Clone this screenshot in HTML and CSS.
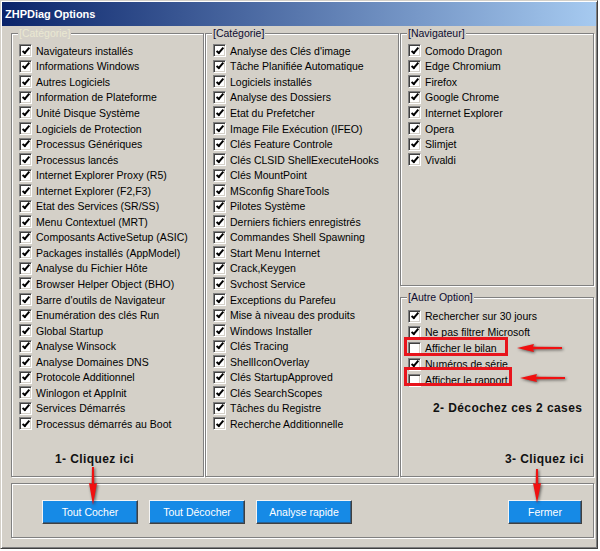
FILE: index.html
```html
<!DOCTYPE html>
<html lang="fr">
<head>
<meta charset="utf-8">
<title>ZHPDiag Options</title>
<link rel="stylesheet" href="styles.css">
</head>
<body>
<div class="window">
  <div class="titlebar"><span class="title">ZHPDiag Options</span></div>
  <div class="content">
    <div class="columns">
      <div class="group">
        <div class="legend disabled">[Catégorie]</div>
        <ul class="list">
          <li class="row"><span class="cb on"></span><span>Navigateurs installés</span></li>
          <li class="row"><span class="cb on"></span><span>Informations Windows</span></li>
          <li class="row"><span class="cb on"></span><span>Autres Logiciels</span></li>
          <li class="row"><span class="cb on"></span><span>Information de Plateforme</span></li>
          <li class="row"><span class="cb on"></span><span>Unité Disque Système</span></li>
          <li class="row"><span class="cb on"></span><span>Logiciels de Protection</span></li>
          <li class="row"><span class="cb on"></span><span>Processus Génériques</span></li>
          <li class="row"><span class="cb on"></span><span>Processus lancés</span></li>
          <li class="row"><span class="cb on"></span><span>Internet Explorer Proxy (R5)</span></li>
          <li class="row"><span class="cb on"></span><span>Internet Explorer (F2,F3)</span></li>
          <li class="row"><span class="cb on"></span><span>Etat des Services (SR/SS)</span></li>
          <li class="row"><span class="cb on"></span><span>Menu Contextuel (MRT)</span></li>
          <li class="row"><span class="cb on"></span><span>Composants ActiveSetup (ASIC)</span></li>
          <li class="row"><span class="cb on"></span><span>Packages installés (AppModel)</span></li>
          <li class="row"><span class="cb on"></span><span>Analyse du Fichier Hôte</span></li>
          <li class="row"><span class="cb on"></span><span>Browser Helper Object (BHO)</span></li>
          <li class="row"><span class="cb on"></span><span>Barre d'outils de Navigateur</span></li>
          <li class="row"><span class="cb on"></span><span>Enumération des clés Run</span></li>
          <li class="row"><span class="cb on"></span><span>Global Startup</span></li>
          <li class="row"><span class="cb on"></span><span>Analyse Winsock</span></li>
          <li class="row"><span class="cb on"></span><span>Analyse Domaines DNS</span></li>
          <li class="row"><span class="cb on"></span><span>Protocole Additionnel</span></li>
          <li class="row"><span class="cb on"></span><span>Winlogon et AppInit</span></li>
          <li class="row"><span class="cb on"></span><span>Services Démarrés</span></li>
          <li class="row"><span class="cb on"></span><span>Processus démarrés au Boot</span></li>
        </ul>
      </div>
      <div class="group">
        <div class="legend">[Catégorie]</div>
        <ul class="list">
          <li class="row"><span class="cb on"></span><span>Analyse des Clés d'image</span></li>
          <li class="row"><span class="cb on"></span><span>Tâche Planifiée Automatique</span></li>
          <li class="row"><span class="cb on"></span><span>Logiciels installés</span></li>
          <li class="row"><span class="cb on"></span><span>Analyse des Dossiers</span></li>
          <li class="row"><span class="cb on"></span><span>Etat du Prefetcher</span></li>
          <li class="row"><span class="cb on"></span><span>Image File Exécution (IFEO)</span></li>
          <li class="row"><span class="cb on"></span><span>Clés Feature Controle</span></li>
          <li class="row"><span class="cb on"></span><span>Clés CLSID ShellExecuteHooks</span></li>
          <li class="row"><span class="cb on"></span><span>Clés MountPoint</span></li>
          <li class="row"><span class="cb on"></span><span>MSconfig ShareTools</span></li>
          <li class="row"><span class="cb on"></span><span>Pilotes Système</span></li>
          <li class="row"><span class="cb on"></span><span>Derniers fichiers enregistrés</span></li>
          <li class="row"><span class="cb on"></span><span>Commandes Shell Spawning</span></li>
          <li class="row"><span class="cb on"></span><span>Start Menu Internet</span></li>
          <li class="row"><span class="cb on"></span><span>Crack,Keygen</span></li>
          <li class="row"><span class="cb on"></span><span>Svchost Service</span></li>
          <li class="row"><span class="cb on"></span><span>Exceptions du Parefeu</span></li>
          <li class="row"><span class="cb on"></span><span>Mise à niveau des produits</span></li>
          <li class="row"><span class="cb on"></span><span>Windows Installer</span></li>
          <li class="row"><span class="cb on"></span><span>Clés Tracing</span></li>
          <li class="row"><span class="cb on"></span><span>ShellIconOverlay</span></li>
          <li class="row"><span class="cb on"></span><span>Clés StartupApproved</span></li>
          <li class="row"><span class="cb on"></span><span>Clés SearchScopes</span></li>
          <li class="row"><span class="cb on"></span><span>Tâches du Registre</span></li>
          <li class="row"><span class="cb on"></span><span>Recherche Additionnelle</span></li>
        </ul>
      </div>
      <div class="col3">
        <div class="group nav">
          <div class="legend">[Navigateur]</div>
          <ul class="list">
            <li class="row"><span class="cb on"></span><span>Comodo Dragon</span></li>
            <li class="row"><span class="cb on"></span><span>Edge Chromium</span></li>
            <li class="row"><span class="cb on"></span><span>Firefox</span></li>
            <li class="row"><span class="cb on"></span><span>Google Chrome</span></li>
            <li class="row"><span class="cb on"></span><span>Internet Explorer</span></li>
            <li class="row"><span class="cb on"></span><span>Opera</span></li>
            <li class="row"><span class="cb on"></span><span>Slimjet</span></li>
            <li class="row"><span class="cb on"></span><span>Vivaldi</span></li>
          </ul>
        </div>
        <div class="group other">
          <div class="legend">[Autre Option]</div>
          <ul class="list tall">
            <li class="row"><span class="cb on"></span><span>Rechercher sur 30 jours</span></li>
            <li class="row"><span class="cb on"></span><span>Ne pas filtrer Microsoft</span></li>
            <li class="row"><span class="cb"></span><span>Afficher le bilan</span></li>
            <li class="row"><span class="cb on"></span><span>Numéros de série</span></li>
            <li class="row"><span class="cb"></span><span>Afficher le rapport</span></li>
          </ul>
        </div>
      </div>
    </div>
    <div class="group buttons">
      <button class="btn">Tout Cocher</button>
      <button class="btn">Tout Décocher</button>
      <button class="btn">Analyse rapide</button>
      <button class="btn close">Fermer</button>
    </div>
  </div>
</div>

<div class="mark mark1"></div>
<div class="mark mark2"></div>

<svg class="arrow arr-l1" width="56" height="20" viewBox="0 0 56 20"><path d="M5 10 L22 6 L21 8.7 L50 9 L50 11 L21 11.3 L22 14 Z"/></svg>
<svg class="arrow arr-l2" width="56" height="20" viewBox="0 0 56 20"><path d="M5 10 L22 6 L21 8.7 L50 9 L50 11 L21 11.3 L22 14 Z"/></svg>
<svg class="arrow arr-d1" width="20" height="48" viewBox="0 0 20 48"><path d="M10 43 L6 21 L8.7 22 L9 5 L11 5 L11.3 22 L14 21 Z"/></svg>
<svg class="arrow arr-d2" width="20" height="48" viewBox="0 0 20 48"><path d="M10 39 L6 19 L8.7 20 L9 5 L11 5 L11.3 20 L14 19 Z"/></svg>

<div class="note note1">1- Cliquez ici</div>
<div class="note note2">2- Décochez ces 2 cases</div>
<div class="note note3">3- Cliquez ici</div>
</body>
</html>
```
FILE: styles.css
```css
html, body {
  margin: 0;
  padding: 0;
}
body {
  position: relative;
  width: 600px;
  height: 551px;
  overflow: hidden;
  background: #ffffff;
  font-family: "Liberation Sans", Arial, sans-serif;
}
.window {
  width: 598px;
  height: 549px;
  box-sizing: border-box;
  background: #d4d0c8;
  border: 1px solid;
  border-color: #d4d0c8 #404040 #404040 #d4d0c8;
  box-shadow: inset 1px 1px #ffffff, inset -1px -1px #808080;
  padding: 1px;
}
.titlebar {
  height: 24px;
  background: linear-gradient(to right, #0a246a, #a6caf0);
  display: flex;
  align-items: center;
  padding-left: 3px;
}
.title {
  color: #ffffff;
  font-weight: bold;
  font-size: 11px;
  line-height: 24px;
}
.content {
  padding: 7px 1px 0 9px;
}
.columns {
  display: grid;
  grid-template-columns: 193px 194px 194px;
  column-gap: 1px;
  height: 444px;
}
.group {
  box-sizing: border-box;
  border: 1px solid #808080;
  box-shadow: inset 1px 1px #ffffff, 1px 1px #ffffff;
  display: flex;
  flex-direction: column;
}
.col3 {
  display: flex;
  flex-direction: column;
  gap: 11px;
}
.nav {
  height: 253px;
}
.other {
  flex: 1;
}
.legend {
  align-self: flex-start;
  margin: -7px 0 0 6px;
  padding: 0 1px;
  background: #d4d0c8;
  font-size: 10.5px;
  line-height: 12px;
  color: #0c0c30;
  white-space: nowrap;
}
.legend.disabled {
  color: #eae8d2;
}
.list {
  list-style: none;
  margin: 0;
  padding: 4px 0 0 7px;
}
.list.tall {
  padding-top: 5px;
}
.row {
  display: flex;
  align-items: center;
  gap: 4px;
  height: 15.55px;
  font-size: 10.5px;
  color: #000000;
  white-space: nowrap;
}
.tall .row {
  height: 16px;
}
.cb {
  flex: none;
  width: 13px;
  height: 13px;
  box-sizing: border-box;
  background: #ffffff;
  border: 1px solid;
  border-color: #808080 #ffffff #ffffff #808080;
  box-shadow: inset 1px 1px #404040, inset -1px -1px #d4d0c8;
  display: flex;
  align-items: center;
  justify-content: center;
}
.cb.on::after {
  content: "";
  width: 2px;
  height: 6px;
  border-right: 2px solid #000000;
  border-bottom: 2px solid #000000;
  transform: rotate(40deg);
  margin-top: -2px;
}
.buttons {
  flex-direction: row;
  align-items: flex-start;
  width: 583px;
  height: 55px;
  margin-top: 6px;
  padding: 16px 11px 0 30px;
  gap: 11px;
}
.btn {
  width: 96px;
  height: 24px;
  margin: 0;
  padding: 0;
  box-sizing: border-box;
  background: #168ae6;
  color: #ffffff;
  font-family: "Liberation Sans", Arial, sans-serif;
  font-size: 10.5px;
  border: 1px solid;
  border-color: #f4f4f4 #404040 #404040 #f4f4f4;
  box-shadow: inset -1px -1px #2a5f8f;
}
.btn.close {
  width: 74px;
  margin-left: auto;
}
.mark {
  position: absolute;
  box-sizing: border-box;
  border: 3px solid #e8141c;
}
.mark1 {
  left: 404px;
  top: 337px;
  width: 104px;
  height: 19px;
}
.mark2 {
  left: 404px;
  top: 367px;
  width: 108px;
  height: 19px;
}
.arrow {
  position: absolute;
  fill: #f01010;
  filter: drop-shadow(1px 1px 1.5px rgba(0, 0, 0, 0.6));
}
.arr-l1 {
  left: 512px;
  top: 338px;
}
.arr-l2 {
  left: 515px;
  top: 368px;
}
.arr-d1 {
  left: 83px;
  top: 462px;
}
.arr-d2 {
  left: 527px;
  top: 464px;
}
.note {
  position: absolute;
  font-family: "Liberation Sans", Arial, sans-serif;
  font-weight: bold;
  font-size: 12px;
  line-height: 14px;
  letter-spacing: 0.4px;
  color: #111111;
  white-space: nowrap;
}
.note1 {
  left: 55px;
  top: 452px;
}
.note2 {
  left: 433px;
  top: 401px;
}
.note3 {
  left: 505px;
  top: 452px;
}
```
